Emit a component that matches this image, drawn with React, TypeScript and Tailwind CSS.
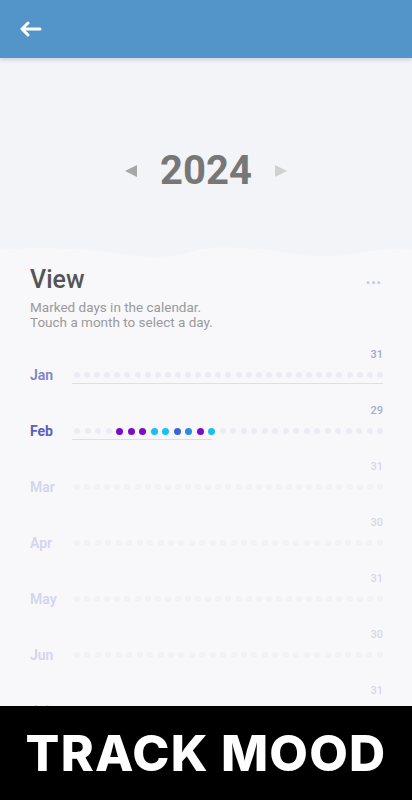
import React from 'react';

type Month = {
  name: string;
  days: number;
  label: string;
  count: string;
  dot: string;
  progress?: string;
  bold?: boolean;
  moods?: Record<number, string>;
};

const PURPLE = 'bg-[#7a0cc4]';
const CYAN = 'bg-[#19c0ea]';
const ROYAL = 'bg-[#3d63d8]';
const BLUE = 'bg-[#268ee0]';

const months: Month[] = [
  { name: 'Jan', days: 31, label: 'text-[#7d82c9]', count: 'text-[#a4a7cd]', dot: 'bg-[#ebebf5]', progress: 'w-full' },
  {
    name: 'Feb',
    days: 29,
    label: 'text-[#5a5ec4]',
    count: 'text-[#a9abd0]',
    dot: 'bg-[#ebebf5]',
    progress: 'w-[140px]',
    bold: true,
    moods: { 5: PURPLE, 6: PURPLE, 7: PURPLE, 8: CYAN, 9: CYAN, 10: ROYAL, 11: BLUE, 12: PURPLE, 13: CYAN },
  },
  { name: 'Mar', days: 31, label: 'text-[#d3d5ee]', count: 'text-[#d5d7eb]', dot: 'bg-[#f1f1f7]' },
  { name: 'Apr', days: 30, label: 'text-[#d3d5ee]', count: 'text-[#d5d7eb]', dot: 'bg-[#f1f1f7]' },
  { name: 'May', days: 31, label: 'text-[#d3d5ee]', count: 'text-[#d5d7eb]', dot: 'bg-[#f1f1f7]' },
  { name: 'Jun', days: 30, label: 'text-[#d3d5ee]', count: 'text-[#d5d7eb]', dot: 'bg-[#f1f1f7]' },
  { name: 'Jul', days: 31, label: 'text-[#d3d5ee]', count: 'text-[#d5d7eb]', dot: 'bg-[#f1f1f7]' },
];

function MonthRow({ m }: { m: Month }) {
  const days = Array.from({ length: m.days }, (_, i) => i + 1);
  return (
    <div className="pb-[20px]">
      <div className={`text-right text-[11px] leading-[14px] font-medium ${m.count}`}>{m.days}</div>
      <div className="mt-[5px] flex h-[16px] items-center">
        <div className={`w-[42px] text-[14px] ${m.bold ? 'font-bold' : 'font-semibold'} ${m.label}`}>{m.name}</div>
        <div className="flex flex-1 items-center justify-between pl-[2px]">
          {days.map((d) =>
            m.moods && m.moods[d] ? (
              <span key={d} className={`h-[7px] w-[7px] rounded-full ${m.moods[d]}`} />
            ) : (
              <span key={d} className={`h-[6px] w-[6px] rounded-full ${m.dot}`} />
            )
          )}
        </div>
      </div>
      <div className="ml-[42px] h-[1px]">
        {m.progress && <div className={`h-[1px] bg-[#dcdef0] ${m.progress}`} />}
      </div>
    </div>
  );
}

export default function App() {
  return (
    <div className="flex h-[800px] w-[412px] flex-col overflow-hidden bg-[#f8f8fa] font-['Roboto',sans-serif]">
      <header className="relative z-10 flex h-[58px] shrink-0 items-center bg-[#5394c9] pl-[20px] shadow-[0_2px_4px_rgba(40,50,90,0.18)]">
        <svg width="22" height="16" viewBox="0 0 22 16" fill="none" stroke="white" strokeWidth="3" strokeLinecap="round" strokeLinejoin="round">
          <path d="M20 8H2M8 2L2 8l6 6" />
        </svg>
      </header>

      <section className="flex h-[186px] shrink-0 items-center justify-center gap-[22px] bg-[#f3f4f8] pt-[40px]">
        <svg width="14" height="14" viewBox="0 0 14 14">
          <path d="M13 1L1 7l12 6z" fill="#a7a7a7" />
        </svg>
        <span className="text-[40px] font-bold leading-none text-[#777777]">2024</span>
        <svg width="14" height="14" viewBox="0 0 14 14">
          <path d="M1 1l12 6-12 6z" fill="#d0d0d0" />
        </svg>
      </section>

      <svg className="block shrink-0 bg-[#f3f4f8]" width="412" height="14" viewBox="0 0 412 14">
        <path
          d="M0 6C40 2 80 4 120 10C150 14 170 14 190 8C210 2 240 2 280 8C310 12 330 14 350 10C375 6 395 4 412 6L412 14L0 14Z"
          fill="#f8f8fa"
        />
      </svg>

      <main className="min-h-0 flex-1 overflow-hidden pl-[30px] pr-[29px] pt-[7px]">
        <div className="flex items-start justify-between">
          <h1 className="text-[25px] font-medium leading-[30px] text-[#555555]">View</h1>
          <span className="mr-[1px] mt-[11px] text-[13px] leading-none tracking-[1px] text-[#c4c6e6]">•••</span>
        </div>
        <p className="mt-[5px] text-[13.5px] leading-[15px] text-[#9a9a9a]">
          Marked days in the calendar.
          <br />
          Touch a month to select a day.
        </p>
        <div className="mt-[18px]">
          {months.map((m) => (
            <MonthRow key={m.name} m={m} />
          ))}
        </div>
      </main>

      <footer className="flex h-[94px] shrink-0 items-center justify-center bg-black">
        <span className="font-['Inter',sans-serif] text-[50px] font-extrabold leading-none tracking-[1.2px] text-white">TRACK MOOD</span>
      </footer>
    </div>
  );
}
